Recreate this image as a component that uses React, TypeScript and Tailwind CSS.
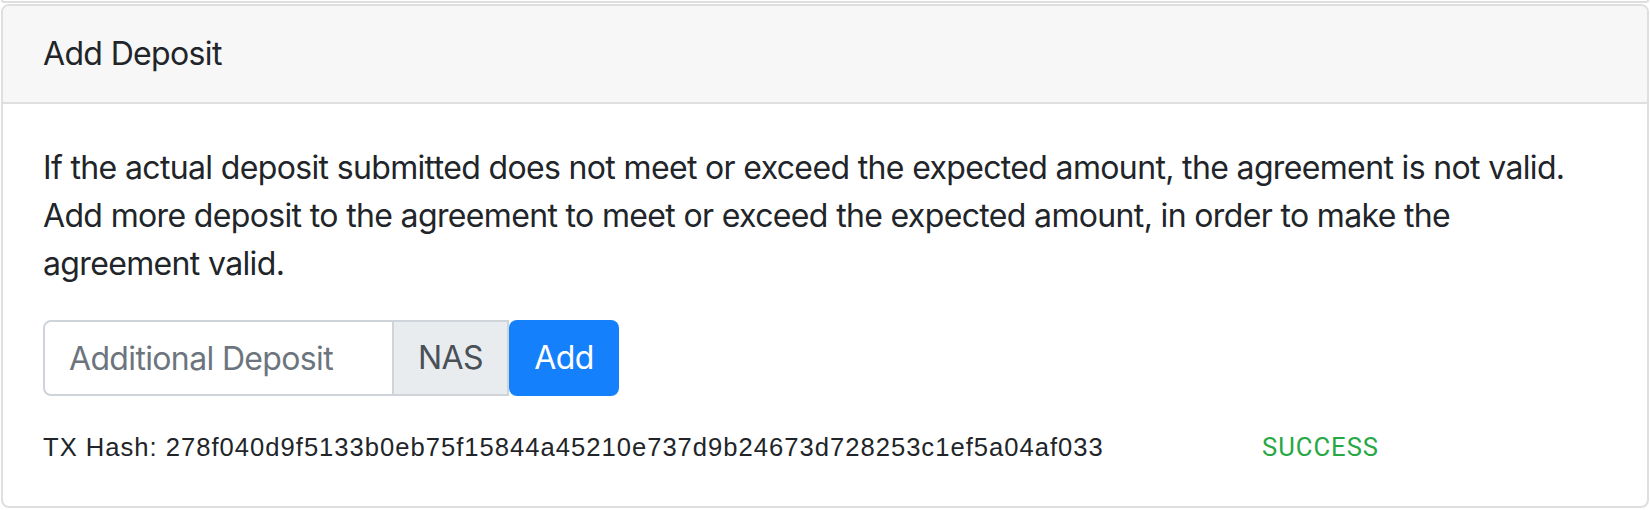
const hash = '278f040d9f5133b0eb75f15844a45210e737d9b24673d728253c1ef5a04af033';

function DepositForm() {
  return (
    <div className="flex h-[76px]">
      <input
        type="text"
        placeholder="Additional Deposit"
        className="w-[351px] h-full rounded-l-lg border-2 border-[#ced4da] bg-white px-[24px] text-[32px] tracking-[-0.65px] text-[#495057] placeholder:text-[#6c757d] outline-none"
      />
      <span className="flex w-[115px] h-full items-center justify-center border-2 border-l-0 border-[#ced4da] bg-[#e9ecef] text-[32px] tracking-[-0.65px] text-[#495057]">
        NAS
      </span>
      <button className="w-[110px] h-full rounded-lg bg-[#1580fb] text-[32px] tracking-[-0.65px] text-white">
        Add
      </button>
    </div>
  );
}

export default function App() {
  return (
    <div className="w-[1650px] h-[510px] bg-white px-px font-['Inter',sans-serif] text-[#212529] overflow-hidden">
      <div className="h-[3px] border-2 border-t-0 border-[#dfdfdf] rounded-b-lg" />
      <div className="mt-px rounded-lg border-2 border-[#dfdfdf] overflow-hidden">
        <div className="bg-[#f7f7f7] border-b-2 border-[#dfdfdf] px-[40px] py-[24px] text-[32px] leading-[48px] tracking-[-0.65px]">
          Add Deposit
        </div>
        <div className="p-[40px]">
          <p className="mb-[32px] text-[32px] leading-[48px] tracking-[-0.65px]">
            If the actual deposit submitted does not meet or exceed the expected amount, the agreement is not valid.
            Add more deposit to the agreement to meet or exceed the expected amount, in order to make the agreement
            valid.
          </p>
          <DepositForm />
          <div className="mt-[32px] flex text-[25.6px] leading-[38.4px]">
            <span className="w-[1219px] shrink-0 font-['Liberation_Sans',sans-serif] tracking-[1px]">
              TX Hash: {hash}
            </span>
            <span className="font-['Roboto',sans-serif] tracking-[1px] text-[#28a745]">SUCCESS</span>
          </div>
        </div>
      </div>
    </div>
  );
}
